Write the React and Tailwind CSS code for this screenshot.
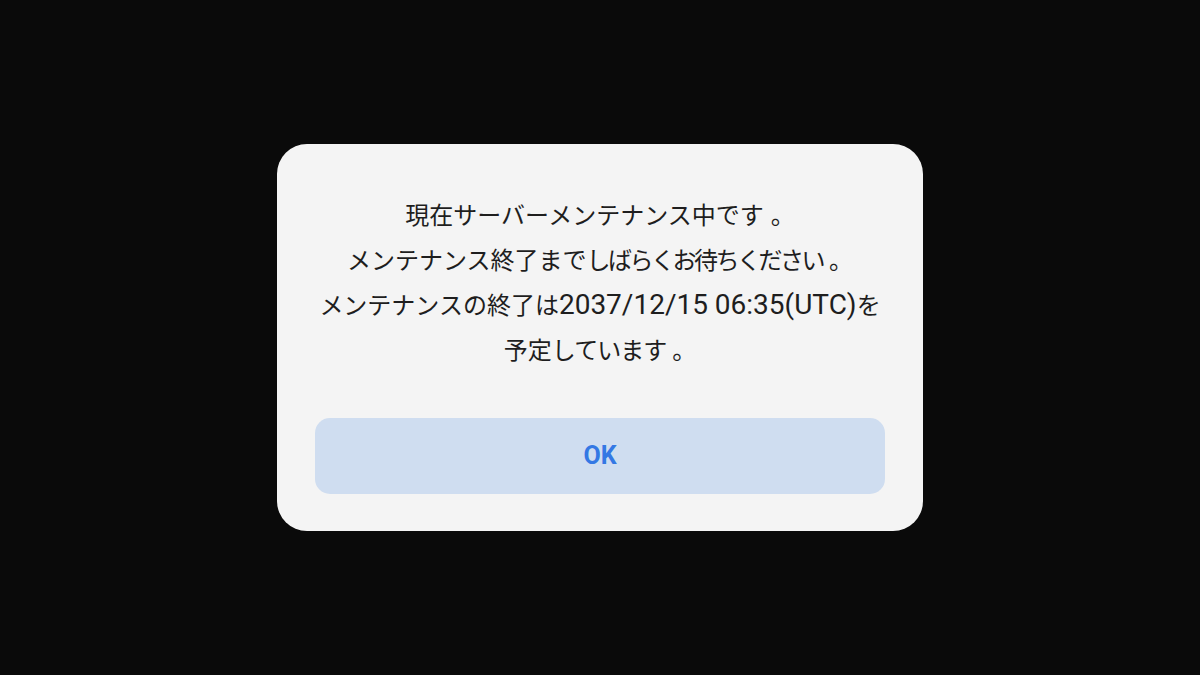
export default function App() {
  return (
    <div className="w-[1200px] h-[675px] bg-[#0a0a0a] flex items-center justify-center" style={{ fontFamily: 'Roboto, "Noto Sans CJK JP", sans-serif' }}>
      <div className="w-[646px] h-[387px] bg-[#f4f4f4] rounded-[30px] flex flex-col items-center pt-[50px] px-[38px]">
        <div className="text-[24px] leading-[45px] text-[#1e1e1e] text-center">
          <p>現在サーバーメンテナンス中です<span className="ml-[7px]">。</span></p>
          <p>メンテナンス終了まで<span className="tracking-[-2.5px]">しばらくお待ちください</span><span className="ml-[6px]">。</span></p>
          <p>メンテナンスの終了は<span className="text-[28px] leading-[20px]">2037/12/15 06:35(UTC)</span>を</p>
          <p>予定<span className="tracking-[-1px]">しています</span><span className="ml-[6px]">。</span></p>
        </div>
        <button className="mt-[44px] w-full h-[76px] rounded-[15px] bg-[#cfddf0] text-[#3478e4] text-[25px] font-bold flex items-center justify-center">
          OK
        </button>
      </div>
    </div>
  );
}
